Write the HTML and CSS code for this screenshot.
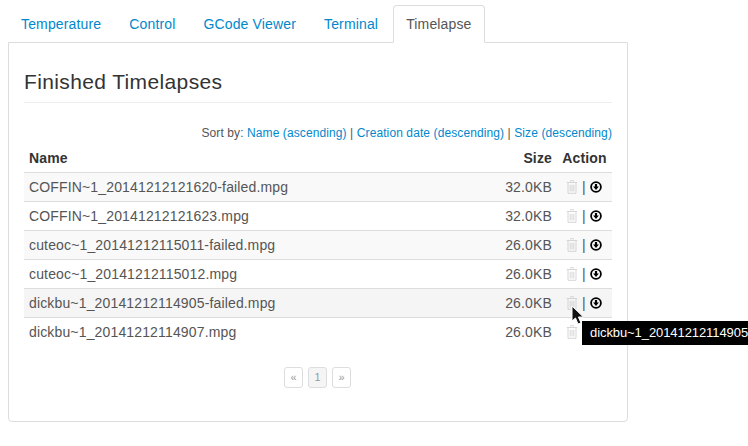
FILE: index.html
```html
<!DOCTYPE html>
<html lang="en">
<head>
<meta charset="utf-8">
<title>Timelapse</title>
<link rel="stylesheet" href="styles.css">
</head>
<body>
<div class="page">
  <ul class="tabs">
    <li><a href="#">Temperature</a></li>
    <li><a href="#">Control</a></li>
    <li><a href="#">GCode Viewer</a></li>
    <li><a href="#">Terminal</a></li>
    <li class="active"><a href="#">Timelapse</a></li>
  </ul>
  <div class="panel">
    <h3 class="title">Finished Timelapses</h3>
    <div class="sort">Sort by: <a href="#">Name (ascending)</a> | <a href="#">Creation date (descending)</a> | <a href="#">Size (descending)</a></div>
    <table class="files">
      <thead>
        <tr><th class="name">Name</th><th class="size">Size</th><th class="action">Action</th></tr>
      </thead>
      <tbody>
        <tr class="odd"><td class="name">COFFIN~1_20141212121620-failed.mpg</td><td class="size">32.0KB</td><td class="action"><svg class="icon trash" viewBox="0 0 12 14"><use href="#trash"/></svg> | <svg class="icon dl" viewBox="0 0 12 12"><use href="#dl"/></svg></td></tr>
        <tr><td class="name">COFFIN~1_20141212121623.mpg</td><td class="size">32.0KB</td><td class="action"><svg class="icon trash" viewBox="0 0 12 14"><use href="#trash"/></svg> | <svg class="icon dl" viewBox="0 0 12 12"><use href="#dl"/></svg></td></tr>
        <tr class="odd"><td class="name">cuteoc~1_20141212115011-failed.mpg</td><td class="size">26.0KB</td><td class="action"><svg class="icon trash" viewBox="0 0 12 14"><use href="#trash"/></svg> | <svg class="icon dl" viewBox="0 0 12 12"><use href="#dl"/></svg></td></tr>
        <tr><td class="name">cuteoc~1_20141212115012.mpg</td><td class="size">26.0KB</td><td class="action"><svg class="icon trash" viewBox="0 0 12 14"><use href="#trash"/></svg> | <svg class="icon dl" viewBox="0 0 12 12"><use href="#dl"/></svg></td></tr>
        <tr class="hover"><td class="name">dickbu~1_20141212114905-failed.mpg</td><td class="size">26.0KB</td><td class="action"><svg class="icon trash" viewBox="0 0 12 14"><use href="#trash"/></svg> | <svg class="icon dl" viewBox="0 0 12 12"><use href="#dl"/></svg></td></tr>
        <tr><td class="name">dickbu~1_20141212114907.mpg</td><td class="size">26.0KB</td><td class="action"><svg class="icon trash" viewBox="0 0 12 14"><use href="#trash"/></svg> | <svg class="icon dl" viewBox="0 0 12 12"><use href="#dl"/></svg></td></tr>
      </tbody>
    </table>
    <ul class="pager">
      <li><a href="#">«</a></li>
      <li class="current"><a href="#">1</a></li>
      <li><a href="#">»</a></li>
    </ul>
  </div>
</div>
<div class="tooltip">dickbu~1_20141212114905</div>
<svg class="cursor" viewBox="0 0 14 20"><path d="M1 1 L1 16 L4.5 13 L7 19 L10 18 L7.4 12 L12.4 12 Z" fill="#111" stroke="#fff" stroke-width="1"/></svg>
<svg class="defs" aria-hidden="true">
  <symbol id="trash" viewBox="0 0 12 14">
    <path d="M4.5 1.5 V.7 H7.5 V1.5 M.8 2.5 H11.2 M2 3 V13.3 H10 V3 M4.2 4.8 V11.5 M6 4.8 V11.5 M7.8 4.8 V11.5" fill="none" stroke="currentColor" stroke-width=".8"/>
  </symbol>
  <symbol id="dl" viewBox="0 0 12 12">
    <circle cx="6" cy="6" r="4.9" fill="none" stroke="currentColor" stroke-width="1.8"/>
    <path d="M4.9 2.9 H7.1 V5.6 H8.9 L6 8.9 L3.1 5.6 H4.9 Z" fill="currentColor"/>
  </symbol>
</svg>
</body>
</html>
```
FILE: styles.css
```css
html, body {
  margin: 0;
  padding: 0;
  height: 100%;
  overflow: hidden;
  background: #fff;
}
body {
  position: relative;
  font-family: "Liberation Sans", Arial, sans-serif;
  font-size: 14px;
  line-height: 20px;
  color: #555;
}
a {
  color: #08c;
  text-decoration: none;
}
.page {
  width: 620px;
  padding: 5px 0 0 8px;
}
.tabs {
  display: flex;
  list-style: none;
  margin: 0 0 -1px;
  padding: 0;
  position: relative;
  letter-spacing: .15px;
}
.tabs li {
  margin-right: 2px;
}
.tabs a {
  display: block;
  padding: 8px 12px;
  border: 1px solid transparent;
  border-radius: 4px 4px 0 0;
}
.tabs .active a {
  color: #555;
  background: #fff;
  border-color: #ddd #ddd #fff;
}
.panel {
  box-sizing: border-box;
  height: 380px;
  padding: 15px;
  border: 1px solid #ddd;
  border-radius: 0 0 4px 4px;
}
.title {
  margin: 10px 0 0;
  padding-bottom: 7px;
  border-bottom: 1px solid #eee;
  font-size: 21px;
  font-weight: 400;
  line-height: 27px;
  letter-spacing: .37px;
  color: #333;
}
.sort {
  margin-top: 20px;
  font-size: 12px;
  line-height: 20px;
  letter-spacing: .1px;
  text-align: right;
}
.files {
  width: 100%;
  margin-top: 1px;
  border-collapse: collapse;
  border-spacing: 0;
  letter-spacing: .15px;
}
.files th, .files td {
  padding: 4px 5px;
  line-height: 20px;
  text-align: left;
}
.files td {
  border-top: 1px solid #ddd;
}
.files th {
  color: #333;
  font-weight: 700;
}
.files .size {
  width: 70px;
  text-align: right;
}
.files .action {
  width: 45px;
  text-align: center;
}
.files .odd {
  background: #f9f9f9;
}
.files .hover {
  background: #f5f5f5;
}
.icon {
  display: inline-block;
}
.trash {
  width: 12px;
  height: 14px;
  color: #ccc;
  vertical-align: -2px;
  margin-left: -1px;
}
.dl {
  width: 12px;
  height: 12px;
  color: #000;
  vertical-align: -1px;
}
.pager {
  display: flex;
  justify-content: center;
  gap: 5px;
  list-style: none;
  margin: 21px 1px 0 0;
  padding: 0;
}
.pager a {
  display: block;
  box-sizing: border-box;
  width: 19px;
  height: 21px;
  border: 1px solid #ddd;
  border-radius: 3px;
  color: #999;
  font-size: 11px;
  line-height: 19px;
  text-align: center;
}
.pager .current a {
  background: #f5f5f5;
}
.tooltip {
  position: absolute;
  left: 582px;
  top: 321px;
  width: 166px;
  box-sizing: border-box;
  padding: 3px 0 3px 8px;
  background: #000;
  color: #fff;
  font-size: 13px;
  line-height: 18px;
  letter-spacing: -.08px;
  white-space: nowrap;
}
.cursor {
  position: absolute;
  left: 571px;
  top: 305px;
  width: 14px;
  height: 20px;
}
.defs {
  position: absolute;
  width: 0;
  height: 0;
}
```
